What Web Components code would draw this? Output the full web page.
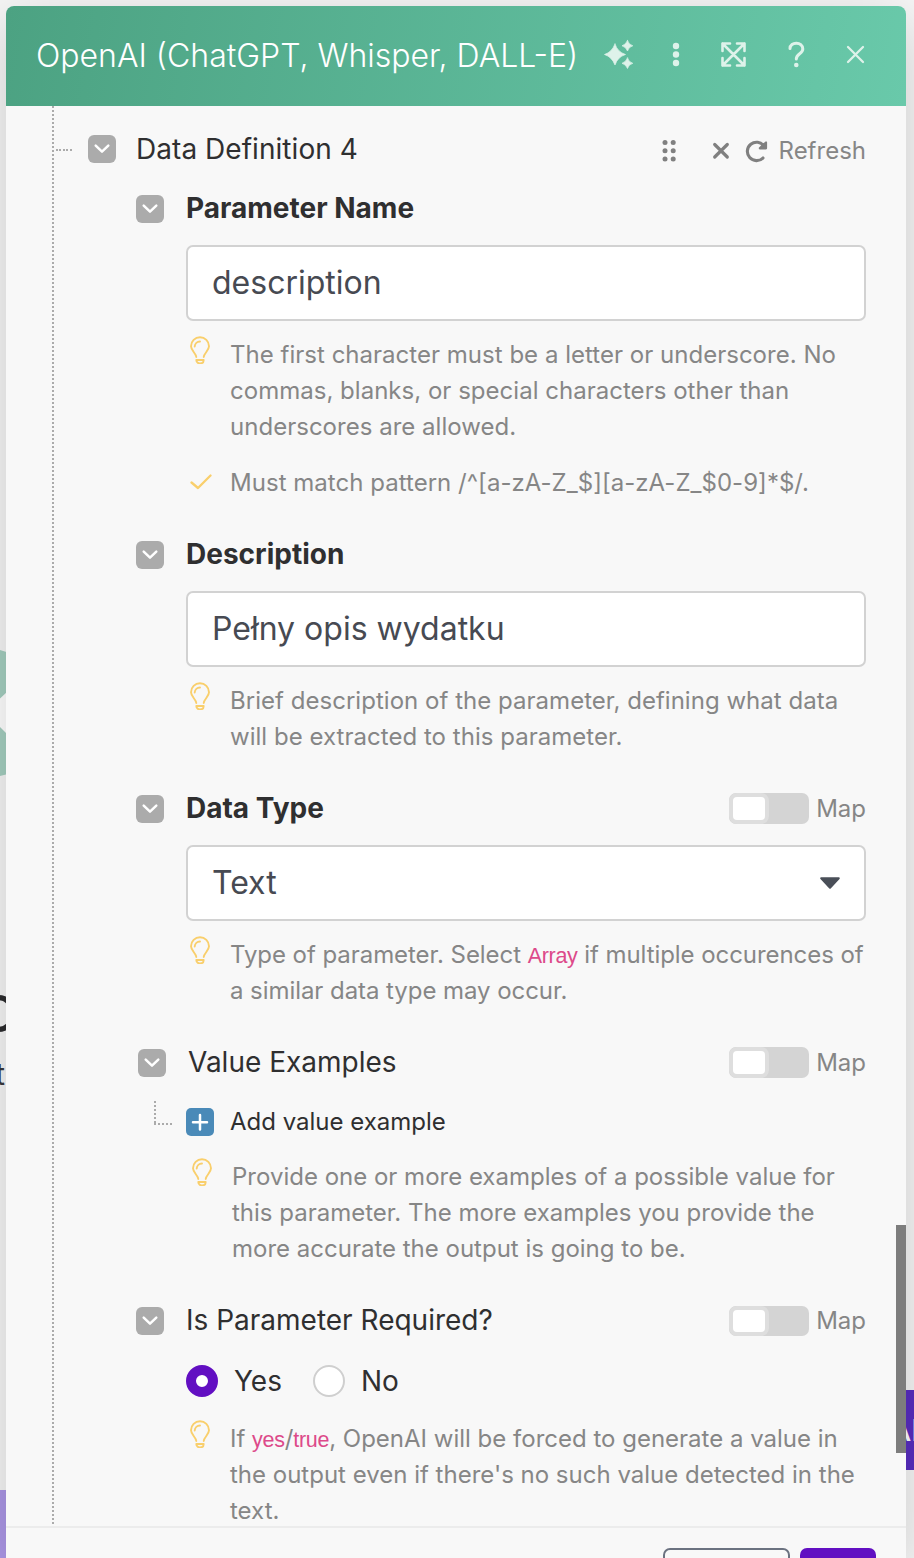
<!DOCTYPE html>
<html lang="en">
<head>
<meta charset="utf-8">
<title>Module settings</title>
<style>
html,body{margin:0;height:100%;overflow:hidden}
body{background:#f6f6f6;font-family:Inter,"Liberation Sans",sans-serif;color:#2f2f30;position:relative}
</style>
</head>
<body>
<scenario-canvas></scenario-canvas>
<module-panel>
  <panel-header slot="header">OpenAI (ChatGPT, Whisper, DALL-E)</panel-header>
  <data-definition heading="Data Definition 4">
    <form-field label="Parameter Name" strong>
      <text-input>description</text-input>
      <help-text slot="help" style="letter-spacing:.02px">The first character must be a letter or underscore. No<br>commas, blanks, or special characters other than<br>underscores are allowed.</help-text>
      <help-text slot="help" icon="check" style="margin-top:20px;letter-spacing:.03px">Must match pattern /^[a-zA-Z_$][a-zA-Z_$0-9]*$/.</help-text>
    </form-field>
    <form-field label="Description" strong>
      <text-input>Pełny opis wydatku</text-input>
      <help-text slot="help" style="letter-spacing:.03px">Brief description of the parameter, defining what data<br>will be extracted to this parameter.</help-text>
    </form-field>
    <form-field label="Data Type" strong map>
      <text-input select>Text</text-input>
      <help-text slot="help" style="letter-spacing:-.06px">Type of parameter. Select <code-word>Array</code-word> if multiple occurences of<br>a similar data type may occur.</help-text>
    </form-field>
    <form-field label="Value Examples" map style="--shift:2px;--top:31px;--gap:23px">
      <add-item>Add value example</add-item>
      <help-text slot="help">Provide one or more examples of a possible value for<br>this parameter. The more examples you provide the<br>more accurate the output is going to be.</help-text>
    </form-field>
    <form-field label="Is Parameter Required?" map style="--top:30px;--gap:24px;--switch:30px">
      <radio-group><radio-item checked>Yes</radio-item><radio-item>No</radio-item></radio-group>
      <help-text slot="help">If <code-word>yes</code-word>/<code-word>true</code-word>, OpenAI will be forced to generate a value in<br>the output even if there's no such value detected in the<br>text.</help-text>
    </form-field>
  </data-definition>
</module-panel>
<script>
function define(name, html){
  const t=document.createElement('template');
  t.innerHTML='<style>*{box-sizing:border-box}svg{display:block;flex:none}</style>'+html;
  customElements.define(name,class extends HTMLElement{
    constructor(){super();this.attachShadow({mode:'open'}).append(t.content.cloneNode(true));}
    connectedCallback(){
      this.shadowRoot.querySelectorAll('[data-text]').forEach(n=>n.textContent=this.getAttribute(n.dataset.text));
    }
  });
}

define('scenario-canvas',`
<style>
:host{position:absolute;inset:0;overflow:hidden;display:block}
div{position:absolute;white-space:nowrap;line-height:1}
svg{position:absolute;left:0;top:640px}
.name{right:896px;top:988px;font-size:51px;font-weight:500;color:#2c2c2e}
.sub{right:909px;top:1059px;font-size:30px;color:#39393b}
.left{left:0;top:1490px;width:20px;height:80px;background:#ac97e6}
.right{left:890px;top:1390px;width:40px;height:80px;background:#582dc0;color:#fff;font-size:30px;padding-top:25px;font-weight:500}
</style>
<svg width="8" height="140"><path d="M0 10L8 12.500V134L0 136Z" fill="#a5cfc0"/><path d="M0 58.500L8 51V95L0 87Z" fill="#fff"/></svg>
<div class="name">O</div><div class="sub">t</div><div class="left"></div><div class="right">AI</div>`);

define('module-panel',`
<style>
:host{position:relative;display:flex;flex-direction:column;width:900px;height:1552px;margin-left:6px;top:6px;border-radius:8px 8px 0 0;background:#f8f8f8;box-shadow:0 14px 60px rgba(0,0,0,.18)}
main{height:1420px;flex:none;overflow:hidden;position:relative}
i{position:absolute;right:0;top:1119px;width:10px;height:228px;background:#7d7d7d}
footer{border-top:2px solid #ececec;height:32px;overflow:hidden;display:flex;justify-content:flex-end;gap:10px;padding:20px 30px 0 0}
b{height:60px;border-radius:7px;width:76px;background:#620fc2}
b.o{width:127px;background:none;border:2px solid #6b7280}
</style>
<slot name="header"></slot><main><slot></slot><i></i></main><footer><b class="o"></b><b></b></footer>`);

define('panel-header',`
<style>
:host{display:flex;align-items:center;height:100px;padding:0 30px 2px;box-sizing:border-box;border-radius:8px 8px 0 0;background:linear-gradient(100deg,#4ca282,#69c9aa);color:#fff;font-size:32px;white-space:nowrap;flex:none}
span{width:568px;flex:none;font-weight:350;padding-top:1px}
svg{fill:none;stroke:#def2ea;stroke-width:2.600;stroke-linecap:round;stroke-linejoin:round}
.f{fill:#def2ea;stroke:none}
</style>
<span><slot></slot></span>
<svg width="272" height="40" viewBox="604 35 272 40">
<path class="f" d="M615 44Q617.500 52 625.500 54.500Q617.500 57 615 65Q612 57 604.500 54.500Q612 52 615 44ZM627.500 40.500Q628.500 44.500 632.800 45.800Q628.500 47 627.500 51Q626 47 622 45.800Q626 44.500 627.500 40.500ZM627.500 58Q628.500 62 632.800 63.300Q628.500 64.500 627.500 68.500Q626 64.500 622 63.300Q626 62 627.500 58Z" style="stroke:#def2ea;stroke-width:.7"/>
<g class="f"><circle cx="676" cy="46" r="3.200"/><circle cx="676" cy="54.500" r="3.200"/><circle cx="676" cy="63" r="3.200"/></g>
<path d="M722.500 43.500L744.500 65.500M744.500 43.500L722.500 65.500M730 43.500H722.500V51M737 43.500H744.500V51M730 65.500H722.500V58M737 65.500H744.500V58"/>
<path stroke-width="3" d="M790 48.500C790 41.200 802.800 41.500 802.800 49C802.800 54 796.300 53.500 796.300 59"/><circle class="f" cx="796.300" cy="65" r="2.300"/>
<path stroke-width="2.300" d="M848 47L863 62M863 47L848 62"/>
</svg>`);

define('toggle-box',`
<style>:host{display:block;width:28px;height:28px;border-radius:6px;background:#ababab;flex:none}path{fill:none;stroke:#fff;stroke-width:2.500;stroke-linecap:round;stroke-linejoin:round}</style>
<svg width="28" height="28"><path d="M7.700 10.700L14 16.700L20.300 10.700"/></svg>`);

define('data-definition',`
<style>
:host{display:block;position:relative;padding:29px 40px 0 82px}
.v{position:absolute;left:46px;top:0;width:2px;height:1418px;background:repeating-linear-gradient(#ababab 0 2px,transparent 2px 4px)}
.h{position:absolute;left:50px;top:43px;width:16px;height:2px;background:repeating-linear-gradient(90deg,#ababab 0 2px,transparent 2px 3.500px)}
header{display:flex;align-items:center;height:28px;font-size:28px}
h2{margin:0 auto 0 20px;font:inherit;letter-spacing:.05px}
span{font-size:24px;color:#868686;margin-left:10px;padding-top:3px}
section{display:grid;grid-template-columns:minmax(0,1fr);gap:40px;margin-top:32px;padding-left:48px}
</style>
<div class="v"></div><div class="h"></div>
<header><toggle-box></toggle-box><h2 data-text="heading"></h2>
<svg width="108" height="28" viewBox="661 134.500 108 28" fill="none" stroke="#808080" stroke-width="3.200" stroke-linecap="round">
<g fill="#808080" stroke="none"><circle cx="665" cy="142" r="2.500"/><circle cx="673.200" cy="142" r="2.500"/><circle cx="665" cy="150.200" r="2.500"/><circle cx="673.200" cy="150.200" r="2.500"/><circle cx="665" cy="158.400" r="2.500"/><circle cx="673.200" cy="158.400" r="2.500"/></g>
<path d="M714.700 144L727.300 156.500M727.300 144L714.700 156.500"/>
<path d="M764 145.500A9.200 9.200 0 1 0 763 157.500" stroke-width="3.100"/><path d="M766 142V147.800H759.800L762 145.500Z" fill="#808080" stroke-width="2.200" stroke-linejoin="round"/>
</svg><span>Refresh</span></header>
<section><slot></slot></section>`);

define('map-switch',`
<style>
:host{display:flex;align-items:center;color:#868686;font-size:24px;position:relative;top:-.5px}
i{width:80px;height:var(--switch,31px);border-radius:7px;background:#d4d4d4;margin-right:7.500px;display:flex}
u{width:40px;height:100%;border:4px solid #dedede;background:#fff;border-radius:8px}
</style><i><u></u></i><span>Map</span>`);

define('form-field',`
<style>
:host{display:block}
header{display:flex;align-items:center;height:28px;padding-left:var(--shift,0)}
h3{margin:-2px auto 0 22px;font-size:28px;font-weight:400;white-space:nowrap}
:host([strong]) h3{font-weight:700}
map-switch{display:none}
:host([map]) map-switch{display:flex}
.c{margin:var(--top,22px) 0 var(--gap,16px) 50px}
.n{padding-left:calc(54px + var(--shift,0px))}
</style>
<header><toggle-box></toggle-box><h3 data-text="label"></h3><map-switch></map-switch></header>
<div class="c"><slot></slot></div><div class="n"><slot name="help"></slot></div>`);

define('text-input',`
<style>
:host{display:flex;align-items:center;justify-content:space-between;box-sizing:border-box;height:76px;border:2px solid #d2d2d2;border-radius:7px;background:#fff;padding:0 24px;font-size:32px;color:#474a52}
span{margin-top:-1px}
svg{display:none}:host([select]) svg{display:block}
</style><span><slot></slot></span><svg width="20" height="12"><path d="M1.200 1.200H18.800L10 10.700Z" fill="#4a4f58" stroke="#4a4f58" stroke-width="2" stroke-linejoin="round"/></svg>`);

define('help-text',`
<style>
:host{display:flex;font-size:24px;line-height:36px;color:#868686;white-space:nowrap}
svg{width:22px;height:28px;margin:-1px 18px 0 0;fill:none;stroke:#f9cf6c;stroke-width:1.900;stroke-linecap:round;stroke-linejoin:round}
.k,:host([icon=check]) .b{display:none}:host([icon=check]) .k{display:block}
</style>
<svg class="b" viewBox="0 0 22 28"><path d="M6.300 21C5.800 17 1 14.500 1 10.300A9 9 0 0 1 19 10.300C19 14.500 14.200 17 13.700 21M4.700 10.500A5.400 5.400 0 0 1 10 5.500M6.300 24H13.700C13.700 28.600 6.300 28.600 6.300 24Z"/></svg>
<svg class="k" viewBox="0 0 22 28"><path stroke-width="2.300" d="M1.500 18.500L8 24L20.500 11.500"/></svg>
<span><slot></slot></span>`);

define('code-word',`<style>:host{font-family:"Liberation Sans",sans-serif;font-size:21.500px;line-height:0;letter-spacing:-.3px;color:#dd4a8a}</style><slot></slot>`);

define('add-item',`
<style>
:host{display:flex;align-items:center;position:relative;height:28px;font-size:24px}
i{position:absolute;left:-32px;top:-7px;width:20px;height:24px;background:repeating-linear-gradient(#ababab 0 2px,transparent 2px 4px) 0 0/2px 100% no-repeat,repeating-linear-gradient(90deg,#ababab 0 2px,transparent 2px 4px) 0 100%/100% 2px no-repeat}
svg{border-radius:5px;background:#4a8ab8;margin-right:16px}
span{margin-top:-1px}
</style><i></i><svg width="28" height="28"><path d="M14 7V21.500M7 14.300H21" stroke="#fff" stroke-width="2.500" stroke-linecap="round"/></svg><span><slot></slot></span>`);

define('radio-group',`<style>:host{display:flex;gap:31px}</style><slot></slot>`);
define('radio-item',`
<style>
:host{display:flex;align-items:center;gap:16px;height:32px;font-size:28px}
i{width:32px;height:32px;border-radius:50%;background:#fff;border:2px solid #cfcfcf}
:host([checked]) i{border:10px solid #620fc2}
</style><i></i><span><slot></slot></span>`);
</script>
</body>
</html>
